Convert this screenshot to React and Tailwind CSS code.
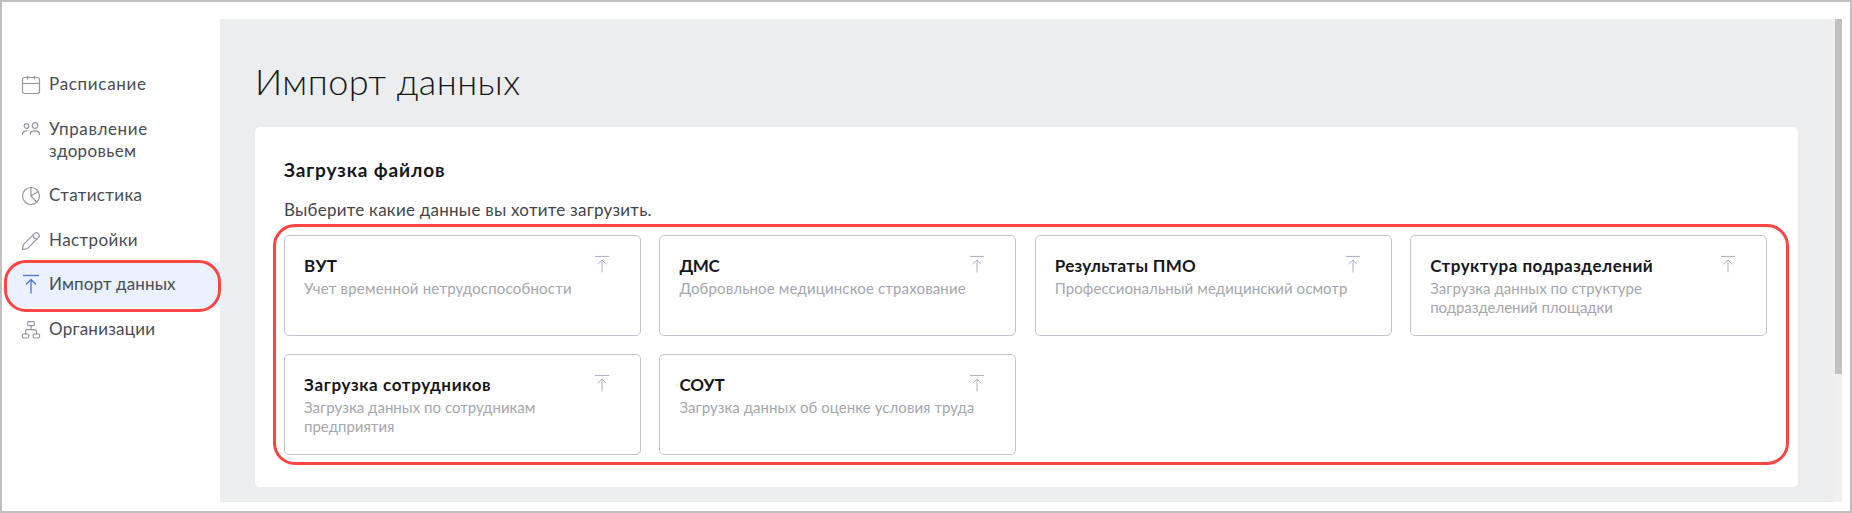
function Icon({ children, className }) {
  return (
    <svg viewBox="0 0 18 18" fill="none" stroke="currentColor" strokeLinecap="round" strokeLinejoin="round" className={className}>
      {children}
    </svg>
  );
}

const navIcon = "mt-[3px] size-[18px] shrink-0 overflow-visible stroke-[1.2] text-[#9396a3]";

const CalendarIcon = () => (
  <Icon className={navIcon}>
    <rect x="0.5" y="1.5" width="17" height="16" rx="2" />
    <path d="M0.5 7.5H17.5M5.5 0V3M12.5 0V3" />
  </Icon>
);

const PeopleIcon = () => (
  <Icon className={navIcon}>
    <circle cx="4.5" cy="5" r="2.3" />
    <circle cx="13" cy="4.5" r="2.8" />
    <path d="M0.5 13.2C0.5 11 2 9.8 4.8 9.8M8.2 13.4C8.2 8.7 17.6 8.7 17.6 13.4" />
  </Icon>
);

const PieIcon = () => (
  <Icon className={navIcon}>
    <circle cx="9" cy="9" r="8.5" />
    <path d="M9 0.5V9L14.8 15.2M9 9L16.2 4.6" />
  </Icon>
);

const PencilIcon = () => (
  <Icon className={navIcon}>
    <path d="M0.5 17.5L1.3 12.7L12.6 1.4C15 -0.8 18.8 2.8 16.6 5.4L5.3 16.7L0.5 17.5Z" />
    <path d="M11 3.2C11 5.6 12.4 7 14.9 7" />
  </Icon>
);

const OrgIcon = () => (
  <Icon className={navIcon}>
    <rect x="5.6" y="0.7" width="6.8" height="4" rx="1.2" />
    <rect x="0.4" y="13" width="6.4" height="4" rx="1.2" />
    <rect x="11.2" y="13" width="6.4" height="4" rx="1.2" />
    <path d="M9 4.7V8.6M3.6 13V10.2Q3.6 8.6 5.2 8.6H12.8Q14.4 8.6 14.4 10.2V13" />
  </Icon>
);

const UploadIcon = ({ className }) => (
  <Icon className={className}>
    <path strokeLinecap="butt" d="M1 0.5H17" />
    <path d="M9 18V5M4.4 9L9 4.5L13.6 9" />
  </Icon>
);

const nav = [
  { icon: <CalendarIcon />, lines: [["Расписание", "tracking-[0.7px]"]] },
  { icon: <PeopleIcon />, lines: [["Управление", "tracking-[0.6px]"], ["здоровьем", "tracking-[0.35px]"]] },
  { icon: <PieIcon />, lines: [["Статистика", "tracking-[0.35px]"]] },
  { icon: <PencilIcon />, lines: [["Настройки", "tracking-[0.4px]"]] },
  {
    icon: <UploadIcon className="mt-[2px] size-[18px] shrink-0 overflow-visible stroke-[1.3] text-[#4a72d8]" />,
    lines: [["Импорт данных", "tracking-[0.12px]"]],
    active: true,
  },
  { icon: <OrgIcon />, lines: [["Организации", "tracking-[0.25px]"]] },
];

const cards = [
  { title: "ВУТ", t: "tracking-[0.4px]", lines: [["Учет временной нетрудоспособности", "tracking-[0.2px]"]] },
  { title: "ДМС", t: "tracking-[-0.4px]", lines: [["Добровльное медицинское страхование", "tracking-[0.15px]"]] },
  { title: "Результаты ПМО", t: "tracking-[0.3px]", lines: [["Профессиональный медицинский осмотр", "tracking-[0.07px]"]] },
  { title: "Структура подразделений", t: "tracking-[0.5px]", lines: [["Загрузка данных по структуре", "tracking-[0.05px]"], ["подразделений площадки", "tracking-[-0.04px]"]] },
  { title: "Загрузка сотрудников", t: "tracking-[0.62px]", lines: [["Загрузка данных по сотрудникам", "tracking-[0.03px]"], ["предприятия", ""]] },
  { title: "СОУТ", t: "tracking-[0px]", lines: [["Загрузка данных об оценке условия труда", "tracking-[0.06px]"]] },
];

function NavItem({ icon, lines, active }) {
  return (
    <a className={`relative flex gap-[9px] pl-[14px] pt-[11px] pb-[11.6px] ${active ? "-mr-[2px] rounded bg-[#ebf2ff]" : ""}`}>
      {icon}
      <span className="flex flex-col text-[17px] leading-[22px] text-[#4a4c53]">
        {lines.map(([text, tracking]) => (
          <span key={text} className={`whitespace-nowrap ${tracking}`}>{text}</span>
        ))}
      </span>
      {active && <span className="absolute -left-[4px] right-px -top-[2px] -bottom-[5px] rounded-[22px] border-[3px] border-[#ff4444]" />}
    </a>
  );
}

function UploadCard({ title, t, lines }) {
  return (
    <div className="flex h-[101px] rounded-[5px] border border-[#c3c4cd] pl-[19px] pr-[30px] pt-[18px]">
      <div className="flex w-0 grow flex-col">
        <h3 className={`whitespace-nowrap text-[17px] font-bold leading-[23px] text-[#16171a] ${t}`}>{title}</h3>
        <p className="mt-[2px] flex flex-col text-[15px] leading-[19px] text-[#a4a7ad]">
          {lines.map(([text, tracking]) => (
            <span key={text} className={`whitespace-nowrap ${tracking}`}>{text}</span>
          ))}
        </p>
      </div>
      <UploadIcon className="mt-[2px] size-4 shrink-0 overflow-visible stroke-[1.1] text-[#a9afc0]" />
    </div>
  );
}

export default function App() {
  return (
    <div className="flex h-[513px] w-[1852px] border-2 border-[#bfbfbf] bg-white pb-[9px] pr-[8px] pt-[17px] font-['Lato','Open_Sans',sans-serif]">
      <nav className="relative z-10 flex w-[218px] shrink-0 flex-col pl-[6px] pt-[43px]">
        {nav.map((item) => (
          <NavItem key={item.lines[0][0]} {...item} />
        ))}
      </nav>
      <main className="flex-1 bg-[#ebedef] pl-[35px] pt-[38px]">
        <h1 className="text-[36px] font-light leading-[48px] tracking-[0.45px] text-[#16171a]">Импорт данных</h1>
        <section className="mt-[22px] h-[360px] w-[1543px] rounded-[5px] bg-white pl-[29px] pt-[30px]">
          <h2 className="text-[19px] font-bold leading-[26px] tracking-[0.85px] text-[#16171a]">Загрузка файлов</h2>
          <p className="mt-[16px] text-[17px] leading-[22px] tracking-[0.25px] text-[#43454b]">Выберите какие данные вы хотите загрузить.</p>
          <div className="-ml-[11px] mt-[3px] h-[241px] w-[1516px] rounded-[22px] border-[3px] border-[#ff4444] pl-[8px] pt-[8px]">
            <div className="grid w-[1483px] grid-cols-4 gap-x-[18.6px] gap-y-[18px]">
              {cards.map((card) => (
                <UploadCard key={card.title} {...card} />
              ))}
            </div>
          </div>
        </section>
      </main>
      <div className="flex w-[9px] shrink-0 justify-end bg-[#f0f0f1]">
        <div className="h-[355px] w-[7px] bg-[#c1c1c1]" />
      </div>
    </div>
  );
}
